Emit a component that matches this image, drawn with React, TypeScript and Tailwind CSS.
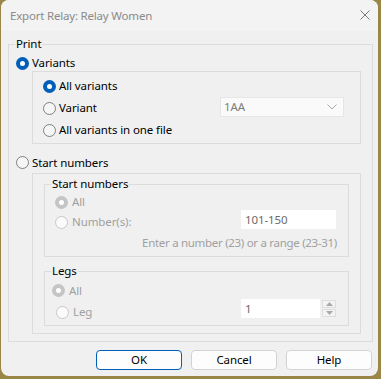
import { ReactNode } from "react";

type RadioProps = {
  checked?: boolean;
  disabled?: boolean;
};

const Radio = ({ checked, disabled }: RadioProps) => {
  if (checked) {
    return (
      <span
        className={`w-[13px] h-[13px] rounded-full shrink-0 flex items-center justify-center ${
          disabled ? "bg-[#c5c5c5]" : "bg-[#005fb8]"
        }`}
      >
        <span className="w-[5px] h-[5px] rounded-full bg-white" />
      </span>
    );
  }
  return (
    <span
      className={`w-[13px] h-[13px] rounded-full shrink-0 border ${
        disabled ? "border-[#c8c8c8] bg-[#fbfbfb]" : "border-[#808080] bg-[#f6f6f6]"
      }`}
    />
  );
};

type OptionProps = {
  label: string;
  checked?: boolean;
  disabled?: boolean;
  gap?: string;
};

const Option = ({ label, checked, disabled, gap = "gap-[3px]" }: OptionProps) => (
  <span className={`flex items-center ${gap}`}>
    <Radio checked={checked} disabled={disabled} />
    <span className={disabled ? "text-[#a0a0a0]" : "text-black"}>{label}</span>
  </span>
);

const Group = ({ title, className, children }: { title: string; className: string; children: ReactNode }) => (
  <fieldset className={`border border-[#dcdcdc] p-0 m-0 ${className}`}>
    <legend className="ml-[6px] px-[1px] leading-[16px] text-black">{title}</legend>
    {children}
  </fieldset>
);

const Button = ({ label, primary }: { label: string; primary?: boolean }) => (
  <button
    className={`w-[86px] h-[20px] rounded-[4px] bg-[#fdfdfd] border leading-[16px] text-black ${
      primary ? "border-[#005fb8]" : "border-[#d3d3d3]"
    }`}
  >
    {label}
  </button>
);

export default function App() {
  return (
    <div
      className="w-[381px] h-[379px] bg-[#9a8748] text-[11.5px] leading-[16px] tracking-[-0.1px]"
      style={{ fontFamily: '"Noto Sans", "Liberation Sans", sans-serif' }}
    >
      <div className="ml-[1px] w-[377px] h-[376px] rounded-[8px] overflow-hidden bg-[#f0f0f0] flex flex-col">
        {/* title bar */}
        <div className="h-[31px] bg-[#f3f3f3] flex items-center justify-between pl-[9px] pr-[8px] shrink-0">
          <span className="text-[11.5px] tracking-[-0.2px] text-[#8a8a8a]">Export Relay: Relay Women</span>
          <svg width="10" height="10" viewBox="0 0 10 10" className="mb-[1px]">
            <path d="M0.5 0.5 L9.5 9.5 M9.5 0.5 L0.5 9.5" stroke="#7a7a7a" strokeWidth="1" />
          </svg>
        </div>

        <div className="pl-[7px] pt-[5px]">
          <Group title="Print" className="w-[365px] h-[306px]">
            <div className="pl-[7px] h-[19px] pt-[3px] flex items-center">
              <Option label="Variants" checked />
            </div>

            {/* variants box */}
            <div className="ml-[23px] w-[329px] h-[73px] border border-[#dcdcdc] pt-[3px]">
              <div className="h-[22px] pl-[10px] flex items-center">
                <Option label="All variants" checked />
              </div>
              <div className="h-[22px] pl-[10px] flex items-center">
                <span className="w-[177px] shrink-0">
                  <Option label="Variant" />
                </span>
                <div className="w-[124px] h-[20px] -mt-[2px] bg-[#fafafa] border border-[#e6e6e6] flex items-center justify-between pl-[3px] pr-[6px]">
                  <span className="text-[#7d7d7d]">1AA</span>
                  <svg width="10" height="6" viewBox="0 0 10 6">
                    <path d="M0.5 0.5 L5 5 L9.5 0.5" fill="none" stroke="#a8a8a8" strokeWidth="1" />
                  </svg>
                </div>
              </div>
              <div className="h-[22px] pl-[10px] flex items-center">
                <Option label="All variants in one file" />
              </div>
            </div>

            <div className="pl-[7px] h-[29px] pt-[8px] flex items-center">
              <Option label="Start numbers" />
            </div>

            {/* start numbers box */}
            <div className="ml-[23px] w-[329px] h-[161px] border border-[#dcdcdc] pt-[2px]">
              <Group title="Start numbers" className="ml-[11px] w-[305px] h-[81px]">
                <div className="h-[20px] pl-[10px] flex items-center">
                  <Option label="All" checked disabled gap="gap-[4px]" />
                </div>
                <div className="h-[20px] pl-[10px] flex items-center">
                  <span className="w-[186px] shrink-0">
                    <Option label="Number(s):" disabled gap="gap-[4px]" />
                  </span>
                  <div className="w-[95px] h-[19px] self-start -mt-[2px] bg-white flex items-center pl-[4px] text-[#6b6b6b]">
                    101-150
                  </div>
                </div>
                <div className="h-[22px] pr-[11px] flex items-center justify-end text-[#a0a0a0] tracking-[-0.3px]">
                  Enter a number (23) or a range (23-31)
                </div>
              </Group>

              <Group title="Legs" className="ml-[11px] mt-[6px] w-[305px] h-[63px]">
                <div className="h-[22px] pt-[1px] pl-[7px] flex items-center">
                  <Option label="All" checked disabled gap="gap-[4px]" />
                </div>
                <div className="h-[22px] pl-[11px] flex items-center">
                  <span className="w-[185px] shrink-0">
                    <Option label="Leg" disabled gap="gap-[4px]" />
                  </span>
                  <div className="w-[79px] h-[19px] self-start -mt-[2px] bg-white flex items-center pl-[4px] text-[#6b6b6b]">
                    1
                  </div>
                  <div className="ml-[2px] w-[14px] self-start -mt-[1px] flex flex-col gap-[1px]">
                    <div className="h-[8px] border border-[#dedede] bg-[#f3f3f3] flex items-center justify-center">
                      <svg width="7" height="4" viewBox="0 0 7 4">
                        <path d="M0 4 L3.5 0 L7 4 Z" fill="#a8a8a8" />
                      </svg>
                    </div>
                    <div className="h-[8px] border border-[#dedede] bg-[#f3f3f3] flex items-center justify-center">
                      <svg width="7" height="4" viewBox="0 0 7 4">
                        <path d="M0 0 L3.5 4 L7 0 Z" fill="#a8a8a8" />
                      </svg>
                    </div>
                  </div>
                </div>
              </Group>
            </div>
          </Group>
        </div>

        <div className="mt-[8px] flex justify-end gap-[9px] pr-[6px]">
          <Button label="OK" primary />
          <Button label="Cancel" />
          <Button label="Help" />
        </div>
      </div>
    </div>
  );
}
